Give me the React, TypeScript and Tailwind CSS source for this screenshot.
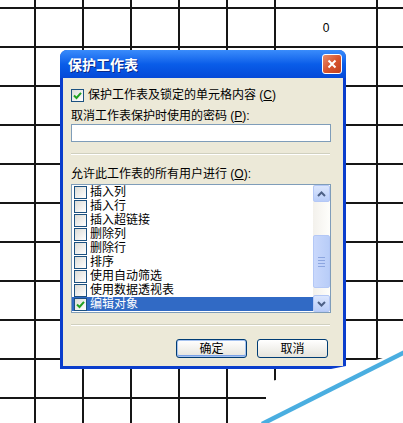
import React from "react";

const font = { fontFamily: '"Liberation Sans", "Noto Sans CJK SC", sans-serif' };

const allowList = [
  { label: "插入列", checked: false },
  { label: "插入行", checked: false },
  { label: "插入超链接", checked: false },
  { label: "删除列", checked: false },
  { label: "删除行", checked: false },
  { label: "排序", checked: false },
  { label: "使用自动筛选", checked: false },
  { label: "使用数据透视表", checked: false },
  { label: "编辑对象", checked: true, selected: true },
];

const Check = ({ checked }: { checked?: boolean }) => (
  <span className="w-[13px] h-[13px] shrink-0 border border-[#1c5180] bg-linear-to-br from-[#dcdcd7] to-white flex items-center justify-center">
    {checked && (
      <svg width="9" height="9" viewBox="0 0 9 9">
        <path d="M1 4.5 L3.5 7 L8 1.8" stroke="#21a121" strokeWidth="2" fill="none" />
      </svg>
    )}
  </span>
);

const ScrollButton = ({ up }: { up?: boolean }) => (
  <div className="h-[17px] w-[17px] rounded-[2px] border border-[#b4c8f6] bg-linear-to-b from-[#dbe6fd] to-[#b9cdf8] flex items-center justify-center">
    <svg width="9" height="6" viewBox="0 0 9 6">
      <path d={up ? "M1 5 L4.5 1.5 L8 5" : "M1 1 L4.5 4.5 L8 1"} stroke="#4d6185" strokeWidth="2" fill="none" />
    </svg>
  </div>
);

const Separator = ({ className }: { className: string }) => (
  <div className={`h-[2px] border-t border-[#d0d0bf] border-b border-b-white ${className}`} />
);

export default function App() {
  const cells = Array.from({ length: 96 });

  return (
    <div className="relative w-[403px] h-[423px] overflow-hidden bg-white" style={font}>
      {/* spreadsheet grid */}
      <div className="grid w-full h-full gap-[2px] bg-[#161616] grid-cols-[34px_46px_46px_46px_46px_46px_100px_1fr] grid-rows-[7px_repeat(10,37px)_1fr]">
        {cells.map((_, i) => (
          <div key={i} className="bg-white flex items-center justify-center text-[12px] leading-[14px] text-black">
            {i === 14 ? "0" : null}
          </div>
        ))}
      </div>

      {/* dialog */}
      <div className="absolute left-[60px] top-[50px] w-[286px] h-[319px] flex flex-col rounded-t-[7px] overflow-hidden bg-[#0a3dcc]">
        <div className="h-[28px] shrink-0 flex items-center justify-between pl-[8px] pr-[4px] bg-linear-to-b from-[#3a8cfb] via-[#0a5de9] to-[#0549d8]">
          <span className="block text-white font-bold text-[14px] leading-[16px] pt-[2px] [text-shadow:1px_1px_0_#0a2a8a]">
            保护工作表
          </span>
          <div className="w-[20px] h-[20px] rounded-[3px] border border-white bg-linear-to-br from-[#e88c6c] via-[#d8552f] to-[#c0401e] flex items-center justify-center">
            <svg width="10" height="10" viewBox="0 0 10 10">
              <path d="M1.5 1.5 L8.5 8.5 M8.5 1.5 L1.5 8.5" stroke="white" strokeWidth="2" />
            </svg>
          </div>
        </div>

        <div className="flex-1 mx-[3px] mb-[3px] bg-[#ece9d8] pl-[8px] pr-[12px] pt-[10px] flex flex-col text-[12px] leading-[14px] text-black">
          <label className="flex items-center gap-[4px] h-[14px]">
            <Check checked />
            <span>
              保护工作表及锁定的单元格内容 (<u>C</u>)
            </span>
          </label>

          <div className="mt-[7px] h-[14px]">
            取消工作表保护时使用的密码 (<u>P</u>):
          </div>
          <div className="mt-[1px] h-[18px] w-[260px] border border-[#7f9db9] bg-white" />

          <Separator className="mt-[11px] w-[259px]" />

          <div className="mt-[12px] h-[14px]">
            允许此工作表的所有用户进行 (<u>O</u>):
          </div>

          <div className="mt-[3px] h-[129px] w-[260px] border border-[#7f9db9] bg-white flex">
            <div className="flex-1 flex flex-col">
              {allowList.map((item) => (
                <div
                  key={item.label}
                  className={`h-[14px] flex items-center gap-[3px] pl-[2px] ${
                    item.selected ? "bg-[#316ac5] text-white" : ""
                  }`}
                >
                  <Check checked={item.checked} />
                  <span>{item.label}</span>
                </div>
              ))}
            </div>
            <div className="w-[17px] flex flex-col bg-linear-to-r from-[#f3f1ec] to-[#fefefb]">
              <ScrollButton up />
              <div className="flex-1 flex flex-col pt-[33px] pb-[7px]">
                <div className="h-[53px] rounded-[2px] border border-[#b4c8f6] bg-linear-to-r from-[#c9d8fc] to-[#b8cdf8] flex flex-col items-center justify-center gap-[2px]">
                  <div className="w-[7px] h-px bg-[#8ca6e0]" />
                  <div className="w-[7px] h-px bg-[#8ca6e0]" />
                  <div className="w-[7px] h-px bg-[#8ca6e0]" />
                  <div className="w-[7px] h-px bg-[#8ca6e0]" />
                </div>
              </div>
              <ScrollButton />
            </div>
          </div>

          <Separator className="mt-[11px] w-[259px]" />

          <div className="mt-[13px] flex justify-end gap-[10px] pr-[3px]">
            <button className="w-[71px] h-[19px] rounded-[3px] border border-[#003c74] bg-linear-to-b from-white to-[#e6e4dc] shadow-[inset_0_0_0_1px_#a6c3f0,inset_0_-1px_0_1px_#7ba2e7] flex items-center justify-center text-[12px] leading-[14px]">
              确定
            </button>
            <button className="w-[71px] h-[19px] rounded-[3px] border border-[#003c74] bg-linear-to-b from-white to-[#e6e4dc] flex items-center justify-center text-[12px] leading-[14px]">
              取消
            </button>
          </div>
        </div>
      </div>

      {/* page-curl watermark in the corner */}
      <svg className="absolute left-0 top-0" width="403" height="423" viewBox="0 0 403 423">
        <polygon points="266,423 266,382 276,380 376,360 403,352 403,423" fill="white" />
        <line x1="262" y1="424" x2="405" y2="352" stroke="#4aaee0" strokeWidth="4.5" />
      </svg>
    </div>
  );
}
